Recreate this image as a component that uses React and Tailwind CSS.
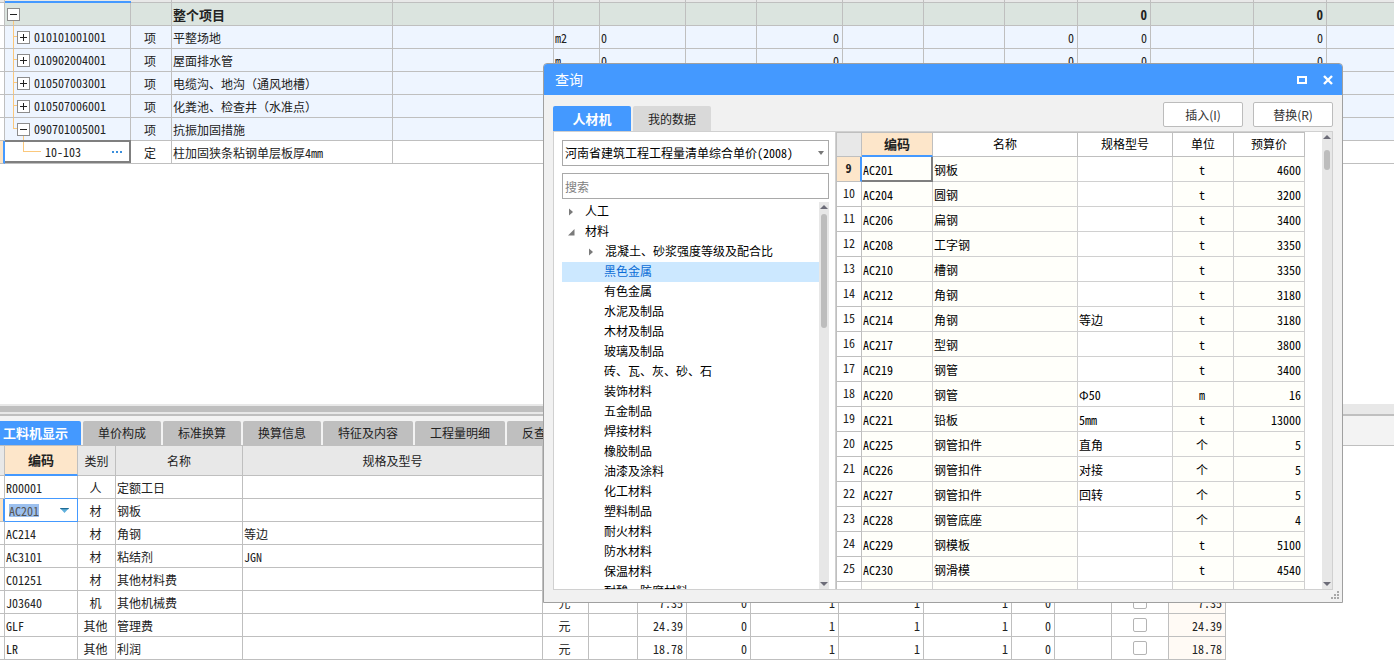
import { useState } from "react";

const FONT =
  "font-['Noto_Sans_Mono_CJK_SC','Noto_Sans_CJK_SC',monospace]";

const projectCols = [
  "w-[5px]", "w-[126px]", "w-[41px]", "w-[221px]", "w-[161px]", "w-[46px]", "w-[86px]", "w-[71px]",
  "w-[86px]", "w-[81px]", "w-[81px]", "w-[73px]", "w-[73px]", "w-[103px]", "w-[73px]", "w-auto",
];

const projectItems = [
  { code: "010101001001", name: "平整场地", unit: "m2", open: false },
  { code: "010902004001", name: "屋面排水管", unit: "m", open: false },
  { code: "010507003001", name: "电缆沟、地沟（通风地槽）", unit: "m", open: false },
  { code: "010507006001", name: "化粪池、检查井（水准点）", unit: "座", open: false },
  { code: "090701005001", name: "抗振加固措施", unit: "m2", open: true },
];

const resourceCols = [
  "w-[5px]", "w-[73px]", "w-[38px]", "w-[127px]", "w-[300px]", "w-[46px]", "w-[49px]", "w-[49px]",
  "w-[64px]", "w-[88px]", "w-[85px]", "w-[88px]", "w-[43px]", "w-[57px]", "w-[57px]", "w-[57px]",
];

const resources = [
  { code: "R00001", kind: "人", name: "定额工日", spec: "", price: "" },
  { code: "AC201", kind: "材", name: "钢板", spec: "", price: "", editing: true },
  { code: "AC214", kind: "材", name: "角钢", spec: "等边", price: "" },
  { code: "AC3101", kind: "材", name: "粘结剂", spec: "JGN", price: "" },
  { code: "C01251", kind: "材", name: "其他材料费", spec: "", price: "" },
  { code: "J03640", kind: "机", name: "其他机械费", spec: "", price: "7.35" },
  { code: "GLF", kind: "其他", name: "管理费", spec: "", price: "24.39" },
  { code: "LR", kind: "其他", name: "利润", spec: "", price: "18.78" },
];

const detailTabs = ["单价构成", "标准换算", "换算信息", "特征及内容", "工程量明细", "反查"];

const categories = [
  "黑色金属", "有色金属", "水泥及制品", "木材及制品", "玻璃及制品", "砖、瓦、灰、砂、石", "装饰材料",
  "五金制品", "焊接材料", "橡胶制品", "油漆及涂料", "化工材料", "塑料制品", "耐火材料", "防水材料",
  "保温材料", "耐酸、防腐材料",
];

const materials = [
  ["AC201", "钢板", "", "t", "4600"],
  ["AC204", "圆钢", "", "t", "3200"],
  ["AC206", "扁钢", "", "t", "3400"],
  ["AC208", "工字钢", "", "t", "3350"],
  ["AC210", "槽钢", "", "t", "3350"],
  ["AC212", "角钢", "", "t", "3180"],
  ["AC214", "角钢", "等边", "t", "3180"],
  ["AC217", "型钢", "", "t", "3800"],
  ["AC219", "钢管", "", "t", "3400"],
  ["AC220", "钢管", "Φ50", "m", "16"],
  ["AC221", "铅板", "5mm", "t", "13000"],
  ["AC225", "钢管扣件", "直角", "个", "5"],
  ["AC226", "钢管扣件", "对接", "个", "5"],
  ["AC227", "钢管扣件", "回转", "个", "5"],
  ["AC228", "钢管底座", "", "个", "4"],
  ["AC229", "钢模板", "", "t", "5100"],
  ["AC230", "钢滑模", "", "t", "4540"],
];

function Columns({ widths }) {
  return (
    <colgroup>
      {widths.map((w, i) => (
        <col key={i} className={w} />
      ))}
    </colgroup>
  );
}

function Toggle({ open, label }) {
  return (
    <button type="button" aria-label={label} aria-expanded={open} className="relative block shrink-0">
      <svg width="13" height="13" viewBox="0 0 13 13" shapeRendering="crispEdges" className="block">
        <rect x="0.5" y="0.5" width="12" height="12" fill="#fff" stroke="#8c8c8c" />
        <path d={open ? "M3 6.5h7" : "M3 6.5h7M6.5 3v7"} stroke="#222" fill="none" />
      </svg>
    </button>
  );
}

function Guide({ d }) {
  return (
    <svg
      width="40"
      height="23"
      viewBox="0 0 40 23"
      shapeRendering="crispEdges"
      aria-hidden="true"
      className="pointer-events-none absolute left-0 top-0"
    >
      <path d={d} fill="none" stroke="#fbc87c" />
    </svg>
  );
}

const cellBase = "h-[23px] border-r border-b border-[#bfbfbf] whitespace-nowrap overflow-hidden";
const pCell = `${cellBase} pt-0.5 pr-[3px] pb-0 pl-px leading-5 last:border-r-0`;
const rCell = `${cellBase} pt-0.5 pr-[3px] pb-0 pl-px leading-5`;
const treeCell = `${cellBase} relative p-0 pl-0.5 leading-[22px]`;

function ProjectTable() {
  return (
    <table aria-label="项目清单" className="w-full table-fixed border-separate border-spacing-0 text-xs text-[#222]">
      <Columns widths={projectCols} />
      <thead>
        <tr>
          {projectCols.map((_, i) => (
            <td
              key={i}
              className={
                i === 1
                  ? "h-[3px] border-b-2 border-[#4499ff] bg-[#e8e8e8] p-0"
                  : "h-[3px] border-b border-r border-[#bfbfbf] bg-[#e8e8e8] p-0 last:border-r-0"
              }
            />
          ))}
        </tr>
      </thead>
      <tbody>
        <tr className="bg-[#dbe4df] text-[13px] font-bold">
          <td className={`${pCell} bg-white`} />
          <td className={treeCell}>
            <Guide d="M8.5 17v6" />
            <Toggle open label="整个项目" />
          </td>
          <td className={pCell} />
          <td className={pCell}>整个项目</td>
          {projectCols.slice(4).map((_, i) => (
            <td key={i} className={`${pCell} text-right`}>{i === 8 || i === 10 ? "0" : ""}</td>
          ))}
        </tr>
        {projectItems.map((r) => (
          <tr key={r.code} className="bg-[#eef5ff]">
            <td className={`${pCell} bg-white`} />
            <td className={treeCell}>
              <Guide d={r.open ? "M8.5 0v10.5h4M18.5 17v6" : "M8.5 0v23M8.5 10.5h4"} />
              <div className="flex items-center gap-1 pl-2.5">
                <Toggle open={r.open} label={r.name} />
                <span>{r.code}</span>
              </div>
            </td>
            <td className={`${pCell} text-center`}>项</td>
            <td className={pCell}>{r.name}</td>
            <td className={pCell} />
            <td className={pCell}>{r.unit}</td>
            <td className={pCell}>0</td>
            <td className={pCell} />
            <td className={`${pCell} text-right`}>0</td>
            <td className={pCell} />
            <td className={pCell} />
            <td className={`${pCell} text-right`}>0</td>
            <td className={`${pCell} text-right`}>0</td>
            <td className={pCell} />
            <td className={`${pCell} text-right`}>0</td>
            <td className={pCell} />
          </tr>
        ))}
        <tr className="bg-white">
          <td className="h-[23px] border-b border-r-2 border-b-[#bfbfbf] border-r-[#4499ff] bg-[#fde4c4] p-0" />
          <td className="relative h-[23px] border-b border-r border-[#bfbfbf] p-0 leading-[22px]">
            <Guide d="M18.5 0v10.5h17" />
            <div className="pointer-events-none absolute -top-px -right-px bottom-0 left-0 border-y-2 border-r-2 border-[#7f7f7f]" />
            <div className="flex items-center justify-between pr-2 pl-10">
              <span>10-103</span>
              <button type="button" aria-label="选择定额" className="relative flex gap-0.5">
                <i className="size-0.5 bg-[#3b8fdc]" />
                <i className="size-0.5 bg-[#3b8fdc]" />
                <i className="size-0.5 bg-[#3b8fdc]" />
              </button>
            </div>
          </td>
          <td className={`${pCell} text-center`}>定</td>
          <td className={pCell}>柱加固狭条粘钢单层板厚4mm</td>
          {projectCols.slice(4).map((_, i) => (
            <td key={i} className={pCell} />
          ))}
        </tr>
      </tbody>
    </table>
  );
}

const rHead = "h-[30px] border-r border-b border-[#bfbfbf] bg-[#e8e8e8] p-0 text-center font-normal leading-[29px]";

function ResourceTable() {
  return (
    <table aria-label="工料机" className="w-[1226px] table-fixed border-separate border-spacing-0 text-xs text-[#222]">
      <Columns widths={resourceCols} />
      <thead>
        <tr>
          <td className={rHead} />
          <th className="h-[30px] border-r border-b-2 border-r-[#bfbfbf] border-b-[#4499ff] bg-[#fde6ca] p-0 text-[13px] leading-[28px] font-bold">
            编码
          </th>
          <th className={rHead}>类别</th>
          <th className={rHead}>名称</th>
          <th className={rHead}>规格及型号</th>
          {resourceCols.slice(5).map((_, i) => (
            <td key={i} className={rHead} />
          ))}
        </tr>
      </thead>
      <tbody>
        {resources.map((r) => (
          <tr key={r.code}>
            <td
              className={
                r.editing
                  ? "h-[23px] border-b border-r-2 border-b-[#bfbfbf] border-r-[#4499ff] bg-[#fde4c4] p-0"
                  : rCell
              }
            />
            {r.editing ? (
              <td className="relative h-[23px] border-b border-r border-[#bfbfbf] p-0">
                <div className="pointer-events-none absolute -top-px -right-px -bottom-px left-0 border-y border-r border-[#4499ff]" />
                <div className="flex items-center justify-between pr-2 pl-1">
                  <input
                    aria-label="编码"
                    defaultValue={r.code}
                    className="h-[13px] w-[30px] bg-[#9cc0ee] p-0 leading-[13px] text-[#555] outline-none"
                  />
                  <button type="button" aria-label="选择材料">
                    <svg width="9" height="5" viewBox="0 0 9 5" className="block">
                      <path d="M0 0h9L4.5 5z" fill="#5fb0dc" />
                      <path d="M0 0h9L8.2 1.2H.8z" fill="#1f6c96" />
                    </svg>
                  </button>
                </div>
              </td>
            ) : (
              <td className={rCell}>{r.code}</td>
            )}
            <td className={`${rCell} text-center`}>{r.kind}</td>
            <td className={rCell}>{r.name}</td>
            <td className={rCell}>{r.spec}</td>
            <td className={`${rCell} text-center`}>{r.price && "元"}</td>
            <td className={rCell} />
            <td className={`${rCell} text-right`}>{r.price}</td>
            <td className={`${rCell} text-right`}>{r.price && "0"}</td>
            <td className={`${rCell} text-right`}>{r.price && "1"}</td>
            <td className={`${rCell} text-right`}>{r.price && "1"}</td>
            <td className={`${rCell} text-right`}>{r.price && "1"}</td>
            <td className={`${rCell} text-right`}>{r.price && "0"}</td>
            <td className={rCell} />
            <td className={`${cellBase} p-0`}>
              <input
                type="checkbox"
                aria-label={r.name}
                className="mx-auto block size-3.5 appearance-none rounded-xs border border-[#b4b4b4] bg-white"
              />
            </td>
            <td className={`${rCell} bg-[#fffaf5] text-right`}>{r.price}</td>
          </tr>
        ))}
      </tbody>
    </table>
  );
}

function ScrollBar({ thumb }) {
  return (
    <div className="flex w-2.5 shrink-0 flex-col items-center bg-[#e7e7e7] py-[3px]" aria-hidden="true">
      <svg width="8" height="4" viewBox="0 0 8 4" className="block shrink-0">
        <path d="M0 4h8L4 0z" fill="#6c6c78" />
      </svg>
      <div className="flex flex-1 pt-[5px] pb-1">
        <div className={`w-1.5 rounded-full bg-[#bdbdbd] ${thumb}`} />
      </div>
      <svg width="8" height="4" viewBox="0 0 8 4" className="block shrink-0">
        <path d="M0 0h8L4 4z" fill="#6c6c78" />
      </svg>
    </div>
  );
}

function Caret({ open }) {
  return (
    <svg width="7" height="8" viewBox="0 0 7 8" className="mt-0.5 block shrink-0" aria-hidden="true">
      <path d={open ? "M6.5 1v6.5H0z" : "M1 .5L5 4L1 7.5z"} fill="#7a7a7a" />
    </svg>
  );
}

function CategoryTree({ selected, onSelect }) {
  return (
    <div className="flex min-h-0 flex-1">
      <ul className="min-w-0 flex-1 overflow-hidden leading-[18px]">
        <li className="flex h-5 items-center gap-2.5 pb-0.5 pl-1.5"><Caret />人工</li>
        <li className="flex h-5 items-center gap-2.5 pb-0.5 pl-1.5"><Caret open />材料</li>
        <li className="flex h-5 items-center gap-2.5 pb-0.5 pl-[26px] whitespace-nowrap">
          <Caret />混凝土、砂浆强度等级及配合比
        </li>
        {categories.map((c) => (
          <li key={c}>
            <button
              type="button"
              onClick={() => onSelect(c)}
              className={
                c === selected
                  ? "block h-5 w-full bg-[#cce8ff] pb-0.5 pl-[42px] text-left text-[#0a6cd6]"
                  : "block h-5 w-full pb-0.5 pl-[42px] text-left"
              }
            >
              {c}
            </button>
          </li>
        ))}
      </ul>
      <ScrollBar thumb="h-[114px]" />
    </div>
  );
}

const mHead = "h-6 border-r border-b border-[#bfbfbf] p-0 pb-px text-center font-normal leading-[22px]";
const mCell = "h-[25px] border-r border-b border-[#d0d0d0] pt-0.5 pr-[3px] pb-0 pl-px leading-[22px] whitespace-nowrap";

function MaterialTable() {
  return (
    <table aria-label="材料" className="w-[468px] table-fixed border-separate border-spacing-0">
      <Columns widths={["w-[25px]", "w-[71px]", "w-[145px]", "w-[95px]", "w-[61px]", "w-[71px]"]} />
      <thead>
        <tr>
          <td className={`${mHead} bg-[#e8e8e8]`} />
          <th className="h-6 border-r border-b-2 border-r-[#bfbfbf] border-b-[#4499ff] bg-[#fde6ca] p-0 text-[13px] leading-[22px] font-bold text-[#222]">
            编码
          </th>
          <th className={mHead}>名称</th>
          <th className={mHead}>规格型号</th>
          <th className={mHead}>单位</th>
          <th className={mHead}>预算价</th>
        </tr>
      </thead>
      <tbody>
        {materials.map(([code, name, spec, unit, price], i) => (
          <tr key={code}>
            <td
              className={
                i === 0
                  ? "h-[25px] border-r-2 border-b border-r-[#4499ff] border-b-[#bfbfbf] bg-[#fde6ca] p-0 pb-0.5 text-center leading-[22px] font-bold text-[#222]"
                  : "h-[25px] border-r border-b border-[#bfbfbf] bg-white p-0 pb-0.5 text-center leading-[22px] text-[#222]"
              }
            >
              {i + 9}
            </td>
            <td className={`${mCell} relative bg-[#fffffa]`}>
              {i === 0 && (
                <div className="pointer-events-none absolute top-0 -right-px -bottom-px left-0 border-r-2 border-b-2 border-[#7f7f7f]" />
              )}
              {code}
            </td>
            <td className={`${mCell} bg-[#fffffa]`}>{name}</td>
            <td className={mCell}>{spec}</td>
            <td className={`${mCell} bg-[#fffffa] text-center`}>{unit}</td>
            <td className={`${mCell} bg-[#fffffa] text-right`}>{price}</td>
          </tr>
        ))}
        <tr>
          <td className={mCell} />
          <td className={`${mCell} bg-[#fffffa]`} />
          <td className={`${mCell} bg-[#fffffa]`} />
          <td className={mCell} />
          <td className={`${mCell} bg-[#fffffa]`} />
          <td className={`${mCell} bg-[#fffffa]`} />
        </tr>
      </tbody>
    </table>
  );
}

const dialogButton =
  "h-[25px] w-20 rounded-xs border border-[#bcbcbc] bg-white font-['Noto_Sans_CJK_SC',sans-serif] leading-[23px] text-[#333]";

function QueryDialog() {
  const [selected, setSelected] = useState("黑色金属");
  return (
    <section
      role="dialog"
      aria-label="查询"
      className="absolute top-[63px] left-[543px] flex h-[540px] w-[800px] flex-col overflow-hidden rounded-t-sm border border-[#a0a0a0] bg-[#f1f1f1] text-xs text-black"
    >
      <header className="flex h-[31px] shrink-0 items-center justify-between bg-[#4499ff] pr-[9px] pl-[11px] text-white">
        <h1 className="pb-0.5 font-['Noto_Sans_CJK_SC',sans-serif] text-sm">查询</h1>
        <div className="flex gap-4">
          <button type="button" aria-label="最大化">
            <svg width="10" height="10" viewBox="0 0 10 10" shapeRendering="crispEdges" className="block">
              <path d="M1 2h8v6H1z" fill="none" stroke="#fff" strokeWidth="2" />
            </svg>
          </button>
          <button type="button" aria-label="关闭">
            <svg width="10" height="10" viewBox="0 0 10 10" className="block">
              <path d="M1 1l8 8M9 1l-8 8" stroke="#fff" strokeWidth="2.4" />
            </svg>
          </button>
        </div>
      </header>

      <div className="flex items-start justify-between px-[9px] pt-[7px]">
        <div role="tablist" className="flex gap-0.5 pt-1">
          <button type="button" role="tab" aria-selected="true" className="h-[25px] w-[78px] rounded-t-xs bg-[#4499ff] text-[13px] font-bold text-white">
            人材机
          </button>
          <button type="button" role="tab" aria-selected="false" className="h-[25px] w-[78px] rounded-t-xs bg-[#d9d9d9] text-[#222]">
            我的数据
          </button>
        </div>
        <div className="flex gap-2.5">
          <button type="button" className={dialogButton}>插入(I)</button>
          <button type="button" className={dialogButton}>替换(R)</button>
        </div>
      </div>

      <div className="mx-[9px] mb-3 flex min-h-0 flex-1 border border-[#d0d0d0] bg-white">
        <div className="flex w-[282px] shrink-0 flex-col border-r border-[#d0d0d0] pl-2">
          <div className="flex flex-col gap-[7px] pt-2 pr-1.5 pb-[3px]">
            <div className="relative">
              <select
                aria-label="定额库"
                className="block h-[26px] w-full appearance-none border border-[#a9a9a9] bg-white px-0.5"
              >
                <option>河南省建筑工程工程量清单综合单价(2008)</option>
              </select>
              <svg width="6" height="4" viewBox="0 0 6 4" className="pointer-events-none absolute top-[11px] right-[5px]">
                <path d="M0 0h6L3 4z" fill="#777" />
              </svg>
            </div>
            <input
              type="search"
              aria-label="搜索"
              placeholder="搜索"
              className="block h-[26px] w-full appearance-none border border-[#a9a9a9] bg-white px-0.5 outline-none placeholder:text-[#808080]"
            />
          </div>
          <div className="flex min-h-0 flex-1 pr-1.5">
            <CategoryTree selected={selected} onSelect={setSelected} />
          </div>
        </div>
        <div className="min-w-0 flex-1 overflow-hidden">
          <div className="w-[469px] border-t border-l border-[#bfbfbf]">
            <MaterialTable />
          </div>
        </div>
        <ScrollBar thumb="h-5 mt-1.5" />
      </div>

      <svg width="8" height="8" viewBox="0 0 8 8" className="absolute right-[3px] bottom-[3px]" aria-hidden="true">
        <path d="M6 0h2v2H6zM3 3h2v2H3zM6 3h2v2H6zM0 6h2v2H0zM3 6h2v2H3zM6 6h2v2H6z" fill="#a8a8a8" />
      </svg>
    </section>
  );
}

export default function App() {
  return (
    <main className={`relative flex min-h-screen flex-col overflow-hidden bg-white ${FONT}`}>
      <div className="min-w-0 flex-1">
        <ProjectTable />
      </div>

      <section className="flex flex-col">
        <div className="border-b-2 border-[#bfbfbf] bg-[#e8e8e8] py-0.5">
          <div className="h-1.5 w-3/5 bg-[#bfbfbf]" />
        </div>
        <div role="tablist" className="flex gap-0.5 border-b border-[#bfbfbf] bg-[#f3f3f3] pt-[5px] text-xs text-[#222]">
          <button type="button" role="tab" aria-selected="true" className="h-6 rounded-tr-xs bg-[#4499ff] pr-[13px] pl-[3px] text-[13px] font-bold text-white">
            工料机显示
          </button>
          {detailTabs.map((t) => (
            <button key={t} type="button" role="tab" aria-selected="false" className="h-6 rounded-t-xs bg-[#bfbfbf] px-[15px]">
              {t}
            </button>
          ))}
        </div>
        <ResourceTable />
      </section>

      <QueryDialog />
    </main>
  );
}
